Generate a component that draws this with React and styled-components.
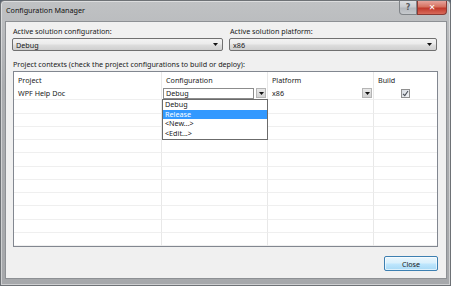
import React from "react";
import styled, { createGlobalStyle } from "styled-components";

const Global = createGlobalStyle`
  html, body { margin: 0; padding: 0; background: #5a6470; }
  body { font-family: "Noto Sans", "Open Sans", sans-serif; }
  * { box-sizing: border-box; }
`;

const Window = styled.div`
  width: 451px;
  height: 286px;
  display: flex;
  flex-direction: column;
  background: linear-gradient(to bottom, #c0c2c4 0%, #abadb0 30%, #a6a8ab 100%);
  border: 1px solid #6e7276;
  border-radius: 4px 4px 0 0;
  box-shadow: inset 0 0 0 1px rgba(255,255,255,0.45);
  overflow: hidden;
`;

const TitleBar = styled.div`
  height: 20px;
  display: flex;
  align-items: flex-start;
  padding: 0 3px 0 5px;
`;

const Title = styled.div`
  flex: 1;
  font-size: 7.2px;
  line-height: 20px;
  color: #111;
  margin-top: -1px;
`;

const CaptionBtn = styled.div`
  width: ${p => p.$w}px;
  height: 14px;
  display: flex;
  align-items: center;
  justify-content: center;
  border: 1px solid ${p => (p.$red ? "#8a3a34" : "#808488")};
  border-top: none;
  border-radius: ${p => (p.$red ? "0 0 4px 0" : "0 0 0 4px")};
  background: ${p =>
    p.$red
      ? "linear-gradient(to bottom, #e6a49c 0%, #d5705f 45%, #c0392b 55%, #d86a5a 100%)"
      : "linear-gradient(to bottom, #dcdee1 0%, #c8cbcf 45%, #b4b8bd 55%, #c6c9cd 100%)"};
  color: ${p => (p.$red ? "#fff" : "#5a5d61")};
  font-size: 8px;
  font-weight: bold;
  font-family: "DejaVu Sans", sans-serif;
`;

const Client = styled.div`
  margin: 0 3px 0 4px;
  background: #f0f0f0;
  border: 1px solid #8d9094;
  padding: 4px 8px 7px 6px;
  display: flex;
  flex-direction: column;
  font-size: 7.2px;
  color: #1a1a1a;
`;

const TopRow = styled.div`
  display: grid;
  grid-template-columns: 211px 208px;
  column-gap: 6px;
`;

const Field = styled.div`
  display: flex;
  flex-direction: column;
`;

const Label = styled.div`
  height: 10px;
  line-height: 10px;
  padding-left: ${p => p.$indent || 1}px;
  margin-bottom: 2px;
  white-space: nowrap;
`;

const Combo = styled.div`
  height: 13px;
  display: flex;
  align-items: center;
  justify-content: space-between;
  padding: 0 4px 0 3px;
  border: 1px solid #707070;
  border-radius: 2px;
  background: linear-gradient(to bottom, #f3f3f3 0%, #ebebeb 45%, #dddddd 55%, #cfcfcf 100%);
`;

const Arrow = () => (
  <svg width="5" height="3" viewBox="0 0 5 3">
    <polygon points="0,0 5,0 2.5,3" fill="#111" />
  </svg>
);

const SectionLabel = styled(Label)`
  margin-top: 8px;
`;

const GridBox = styled.div`
  margin-left: 1px;
  height: 176px;
  border: 1px solid #828790;
  background: #fff;
  display: grid;
  grid-template-columns: 148px 106px 106px 1fr;
  grid-template-rows: 15px repeat(12, 13.25px);
  overflow: hidden;
`;

const Cell = styled.div`
  position: relative;
  display: flex;
  align-items: center;
  justify-content: ${p => (p.$center ? "center" : "flex-start")};
  padding-left: ${p => (p.$pad ?? 4)}px;
  border-right: ${p => (p.$last ? "none" : "1px solid #e8e8e8")};
  border-bottom: ${p => (p.$head ? "none" : "1px solid #efefef")};
  white-space: nowrap;
`;

const EditBox = styled.div`
  flex: 1;
  height: 11px;
  border: 1px solid #8c8c8c;
  background: #fff;
  padding-left: 2px;
  line-height: 9px;
  margin-right: 2px;
`;

const CellText = styled.div`
  flex: 1;
`;

const DropBtn = styled.div`
  width: 10px;
  height: 10px;
  margin-right: 1px;
  display: flex;
  align-items: center;
  justify-content: center;
  border: 1px solid #b5b5b5;
  background: linear-gradient(to bottom, #e9e9e9, #d2d2d2);
`;

const Check = styled.div`
  width: 9px;
  height: 9px;
  border: 1px solid #8f8f8f;
  background: linear-gradient(135deg, #d6dbe2, #f3f4f6);
  display: flex;
  align-items: center;
  justify-content: center;
`;

const DropList = styled.div`
  position: absolute;
  left: 0;
  top: 12px;
  width: 106px;
  border: 1px solid #6b6b6b;
  background: #fff;
  z-index: 2;
  padding: 0;
`;

const DropItem = styled.div`
  height: 9.7px;
  line-height: 9.7px;
  padding-left: 2px;
  background: ${p => (p.$sel ? "#3399ff" : "transparent")};
  color: ${p => (p.$sel ? "#fff" : "#1a1a1a")};
`;

const Footer = styled.div`
  display: flex;
  justify-content: flex-end;
  margin-top: 9px;
`;

const Button = styled.div`
  width: 54px;
  height: 15px;
  display: flex;
  align-items: center;
  justify-content: center;
  border: 1px solid #3c7fb1;
  border-radius: 2px;
  background: linear-gradient(to bottom, #eaf6fd 0%, #d9f0fc 45%, #bee6fd 55%, #a7d9f5 100%);
  box-shadow: inset 0 0 0 1px rgba(255,255,255,0.6);
  font-size: 7.2px;
`;

const columns = ["Project", "Configuration", "Platform", "Build"];

export default function App() {
  const emptyRows = Array.from({ length: 11 });
  return (
    <>
      <Global />
      <Window>
        <TitleBar>
          <Title>Configuration Manager</Title>
          <CaptionBtn $w={18}>?</CaptionBtn>
          <CaptionBtn $w={30} $red>✕</CaptionBtn>
        </TitleBar>
        <Client>
          <TopRow>
            <Field>
              <Label>Active solution configuration:</Label>
              <Combo>
                <span>Debug</span>
                <Arrow />
              </Combo>
            </Field>
            <Field>
              <Label>Active solution platform:</Label>
              <Combo>
                <span>x86</span>
                <Arrow />
              </Combo>
            </Field>
          </TopRow>
          <SectionLabel>
            Project contexts (check the project configurations to build or deploy):
          </SectionLabel>
          <GridBox>
            {columns.map((c, i) => (
              <Cell key={c} $head $last={i === 3}>{c}</Cell>
            ))}
            <Cell>WPF Help Doc</Cell>
            <Cell $pad={1}>
              <EditBox>Debug</EditBox>
              <DropBtn><Arrow /></DropBtn>
              <DropList>
                <DropItem>Debug</DropItem>
                <DropItem $sel>Release</DropItem>
                <DropItem>&lt;New...&gt;</DropItem>
                <DropItem>&lt;Edit...&gt;</DropItem>
              </DropList>
            </Cell>
            <Cell>
              <CellText>x86</CellText>
              <DropBtn><Arrow /></DropBtn>
            </Cell>
            <Cell $center $pad={0} $last>
              <Check>
                <svg width="7" height="7" viewBox="0 0 7 7">
                  <path d="M1 3.8 L2.8 5.6 L6 1" stroke="#4a4f57" strokeWidth="1.1" fill="none" />
                </svg>
              </Check>
            </Cell>
            {emptyRows.map((_, r) =>
              columns.map((c, i) => <Cell key={r + c} $last={i === 3} />)
            )}
          </GridBox>
          <Footer>
            <Button>Close</Button>
          </Footer>
        </Client>
      </Window>
    </>
  );
}
